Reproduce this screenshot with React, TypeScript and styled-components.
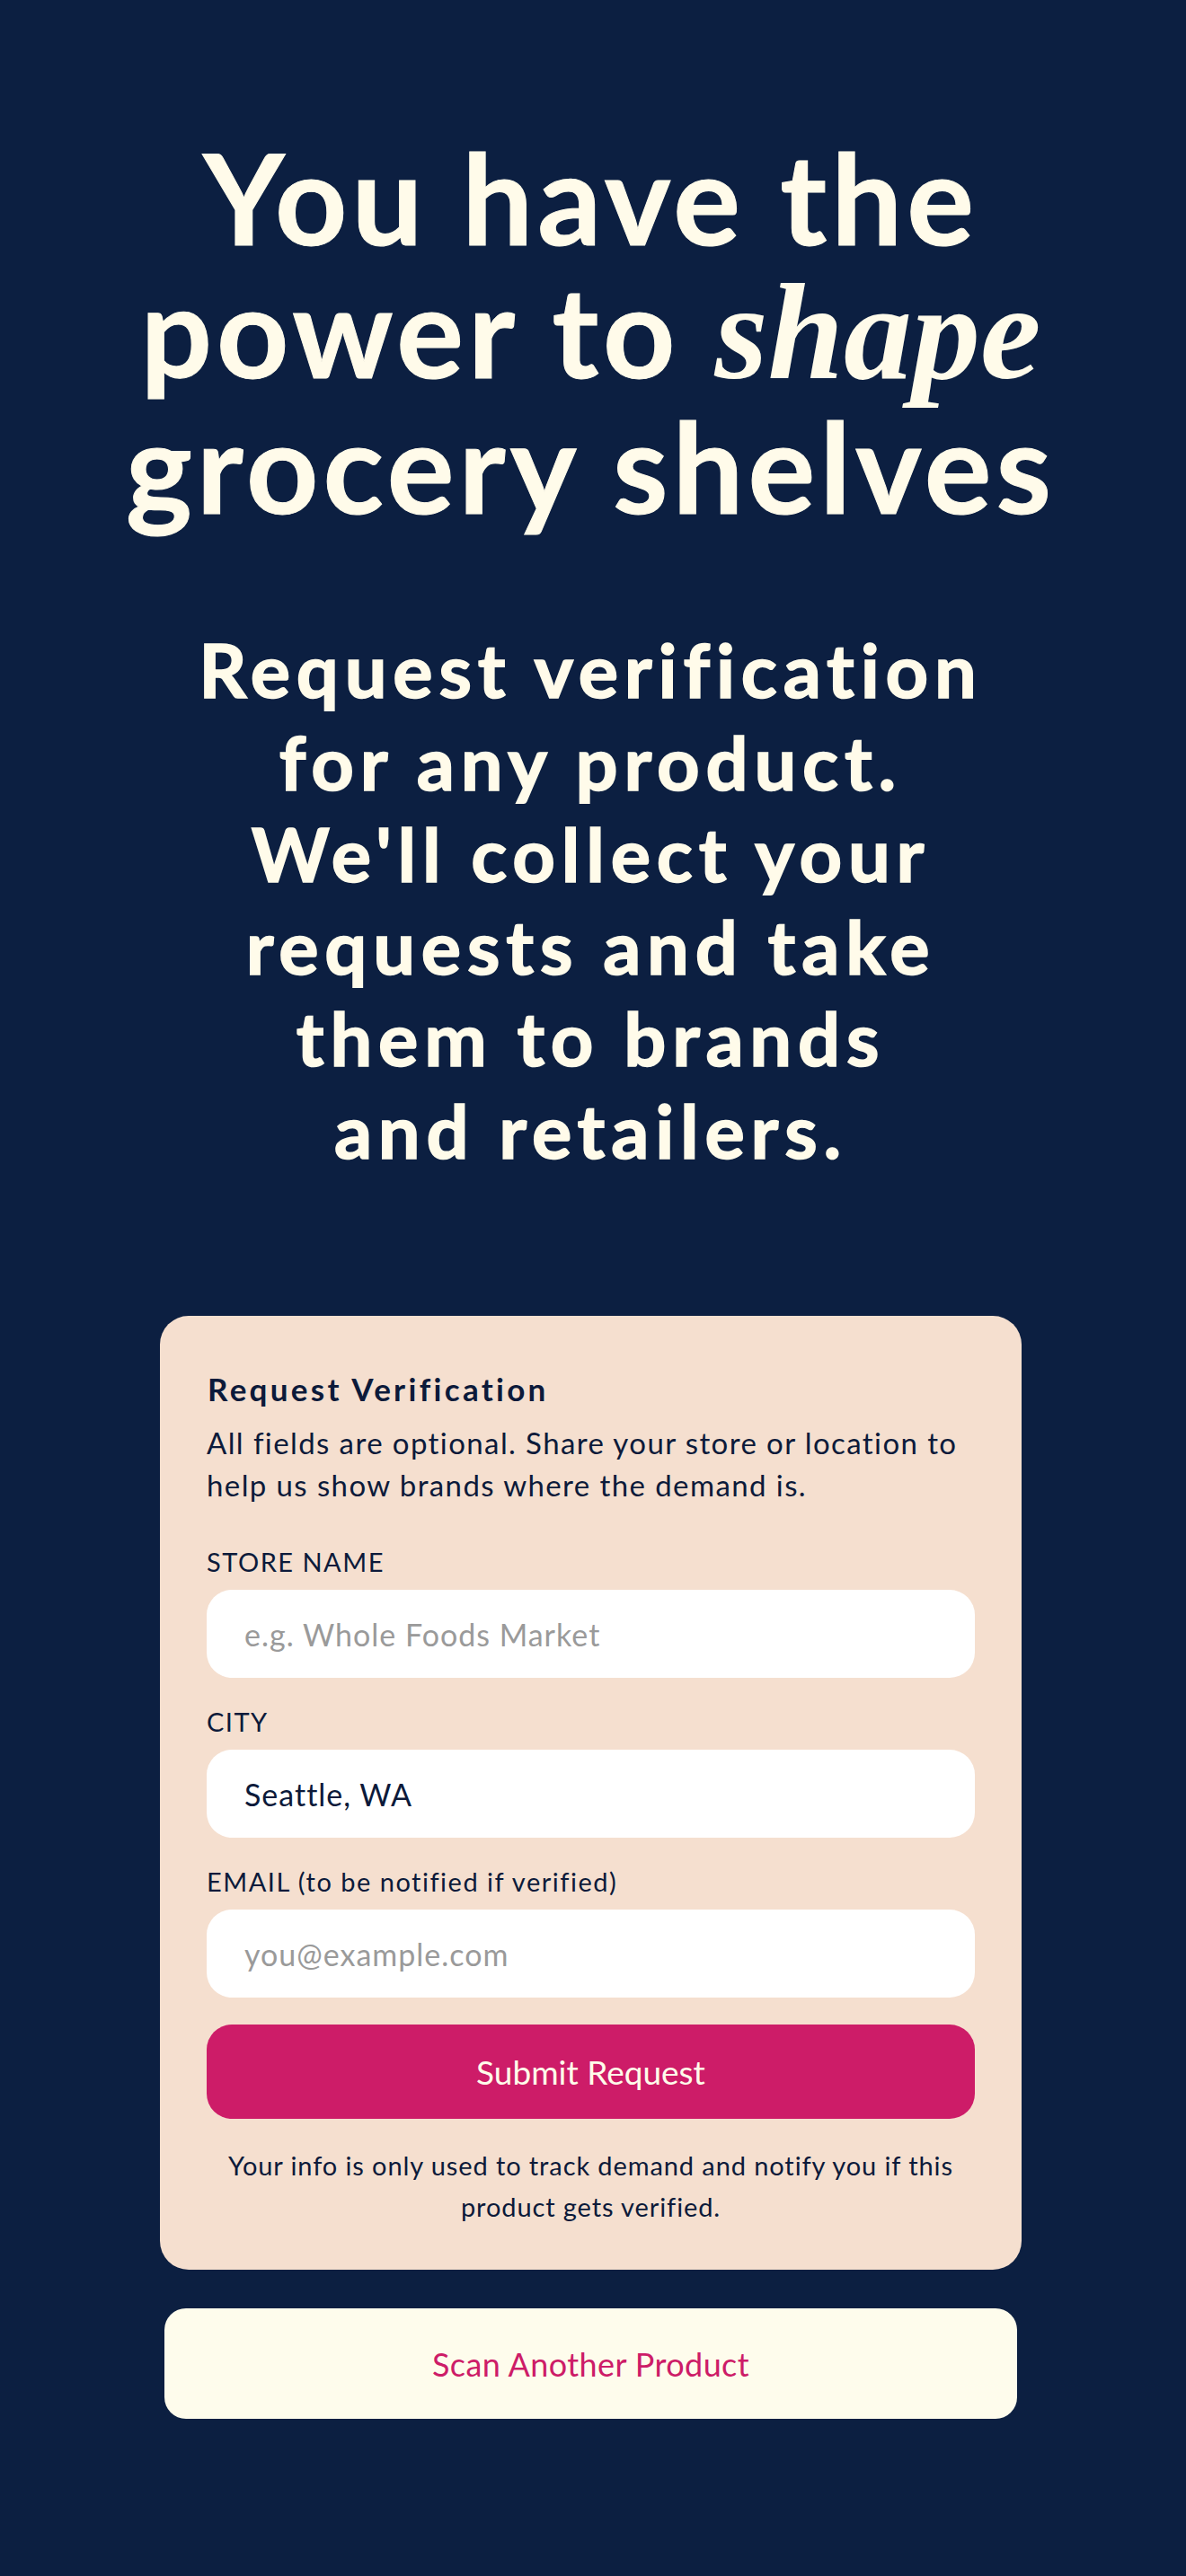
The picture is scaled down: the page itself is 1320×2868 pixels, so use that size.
import { createGlobalStyle, styled } from "styled-components";

const GlobalStyle = createGlobalStyle`
  html, body {
    margin: 0;
    padding: 0;
    background: #0c1f41;
  }
  * {
    box-sizing: border-box;
  }
`;

const Page = styled.main`
  width: 100%;
  min-height: 2868px;
  background: #0c1f41;
  display: flex;
  flex-direction: column;
  align-items: center;
  font-family: Lato, "Open Sans", sans-serif;
  color: #fffbea;
  padding: 145px 5px 174px 0;
`;

const Headline = styled.h1`
  margin: 0;
  font-size: 140px;
  line-height: 148px;
  font-weight: 700;
  text-align: center;
  letter-spacing: 5px;
  color: #fffbea;
  -webkit-text-stroke: 1px #fffbea;
  white-space: nowrap;
`;

const Accent = styled.em`
  font-family: "Liberation Serif", "DejaVu Serif", serif;
  font-size: 152px;
  font-style: italic;
  font-weight: 700;
  letter-spacing: 0;
  -webkit-text-stroke: 0;
`;

const Lede = styled.p`
  margin: 102px 0 0;
  font-size: 83px;
  line-height: 102.5px;
  font-weight: 700;
  letter-spacing: 6.8px;
  text-align: center;
  white-space: nowrap;
  color: #fffbea;
  -webkit-text-stroke: 1.6px #fffbea;
`;

const Card = styled.section`
  margin-top: 156px;
  width: 959px;
  background: #f5dfcf;
  border-radius: 32px;
  padding: 60px 52px 47px;
  display: flex;
  flex-direction: column;
  color: #0c1a3a;
`;

const CardTitle = styled.h2`
  margin: 0 0 0 1px;
  font-size: 35px;
  line-height: 42px;
  font-weight: 700;
  letter-spacing: 3.3px;
`;

const CardText = styled.p`
  margin: 16px 0 0;
  font-size: 33px;
  line-height: 47px;
  font-weight: 400;
  letter-spacing: 1.4px;
`;

const Fields = styled.div`
  margin-top: 45px;
  display: flex;
  flex-direction: column;
  gap: 32px;
`;

const Field = styled.label`
  display: flex;
  flex-direction: column;
  gap: 14px;
`;

const FieldLabel = styled.span`
  font-size: 29px;
  line-height: 34px;
  font-weight: 400;
  letter-spacing: 1.5px;
`;

const Input = styled.input`
  height: 98px;
  width: 100%;
  border: none;
  outline: none;
  border-radius: 28px;
  background: #ffffff;
  padding: 0 42px;
  font-family: Lato, "Open Sans", sans-serif;
  font-size: 34px;
  letter-spacing: 1px;
  color: #0c1a3a;
  &::placeholder {
    color: #9a9a9a;
  }
`;

const SubmitButton = styled.button`
  margin-top: 30px;
  height: 105px;
  width: 100%;
  border: none;
  border-radius: 28px;
  background: #cd1c68;
  color: #fffbea;
  font-family: Lato, "Open Sans", sans-serif;
  font-size: 37px;
  font-weight: 400;
  cursor: pointer;
`;

const Note = styled.p`
  margin: 29px 0 0;
  font-size: 29px;
  line-height: 46px;
  letter-spacing: 0.9px;
  text-align: center;
  padding: 0 20px;
`;

const SecondaryButton = styled.button`
  margin-top: 43px;
  width: 949px;
  height: 123px;
  border: none;
  border-radius: 24px;
  background: #fefcec;
  color: #cd1c68;
  font-family: Lato, "Open Sans", sans-serif;
  font-size: 36px;
  font-weight: 400;
  letter-spacing: 0.4px;
  cursor: pointer;
`;

export default function App() {
  return (
    <>
      <GlobalStyle />
      <Page>
        <Headline>
          You have the
          <br />
          power to <Accent>shape</Accent>
          <br />
          grocery shelves
        </Headline>
        <Lede>
          Request verification
          <br />
          for any product.
          <br />
          We'll collect your
          <br />
          requests and take
          <br />
          them to brands
          <br />
          and retailers.
        </Lede>
        <Card>
          <CardTitle>Request Verification</CardTitle>
          <CardText>
            All fields are optional. Share your store or location to help us
            show brands where the demand is.
          </CardText>
          <Fields>
            <Field>
              <FieldLabel>STORE NAME</FieldLabel>
              <Input placeholder="e.g. Whole Foods Market" />
            </Field>
            <Field>
              <FieldLabel>CITY</FieldLabel>
              <Input defaultValue="Seattle, WA" />
            </Field>
            <Field>
              <FieldLabel>EMAIL (to be notified if verified)</FieldLabel>
              <Input placeholder="you@example.com" />
            </Field>
          </Fields>
          <SubmitButton>Submit Request</SubmitButton>
          <Note>
            Your info is only used to track demand and notify you if this
            product gets verified.
          </Note>
        </Card>
        <SecondaryButton>Scan Another Product</SecondaryButton>
      </Page>
    </>
  );
}
